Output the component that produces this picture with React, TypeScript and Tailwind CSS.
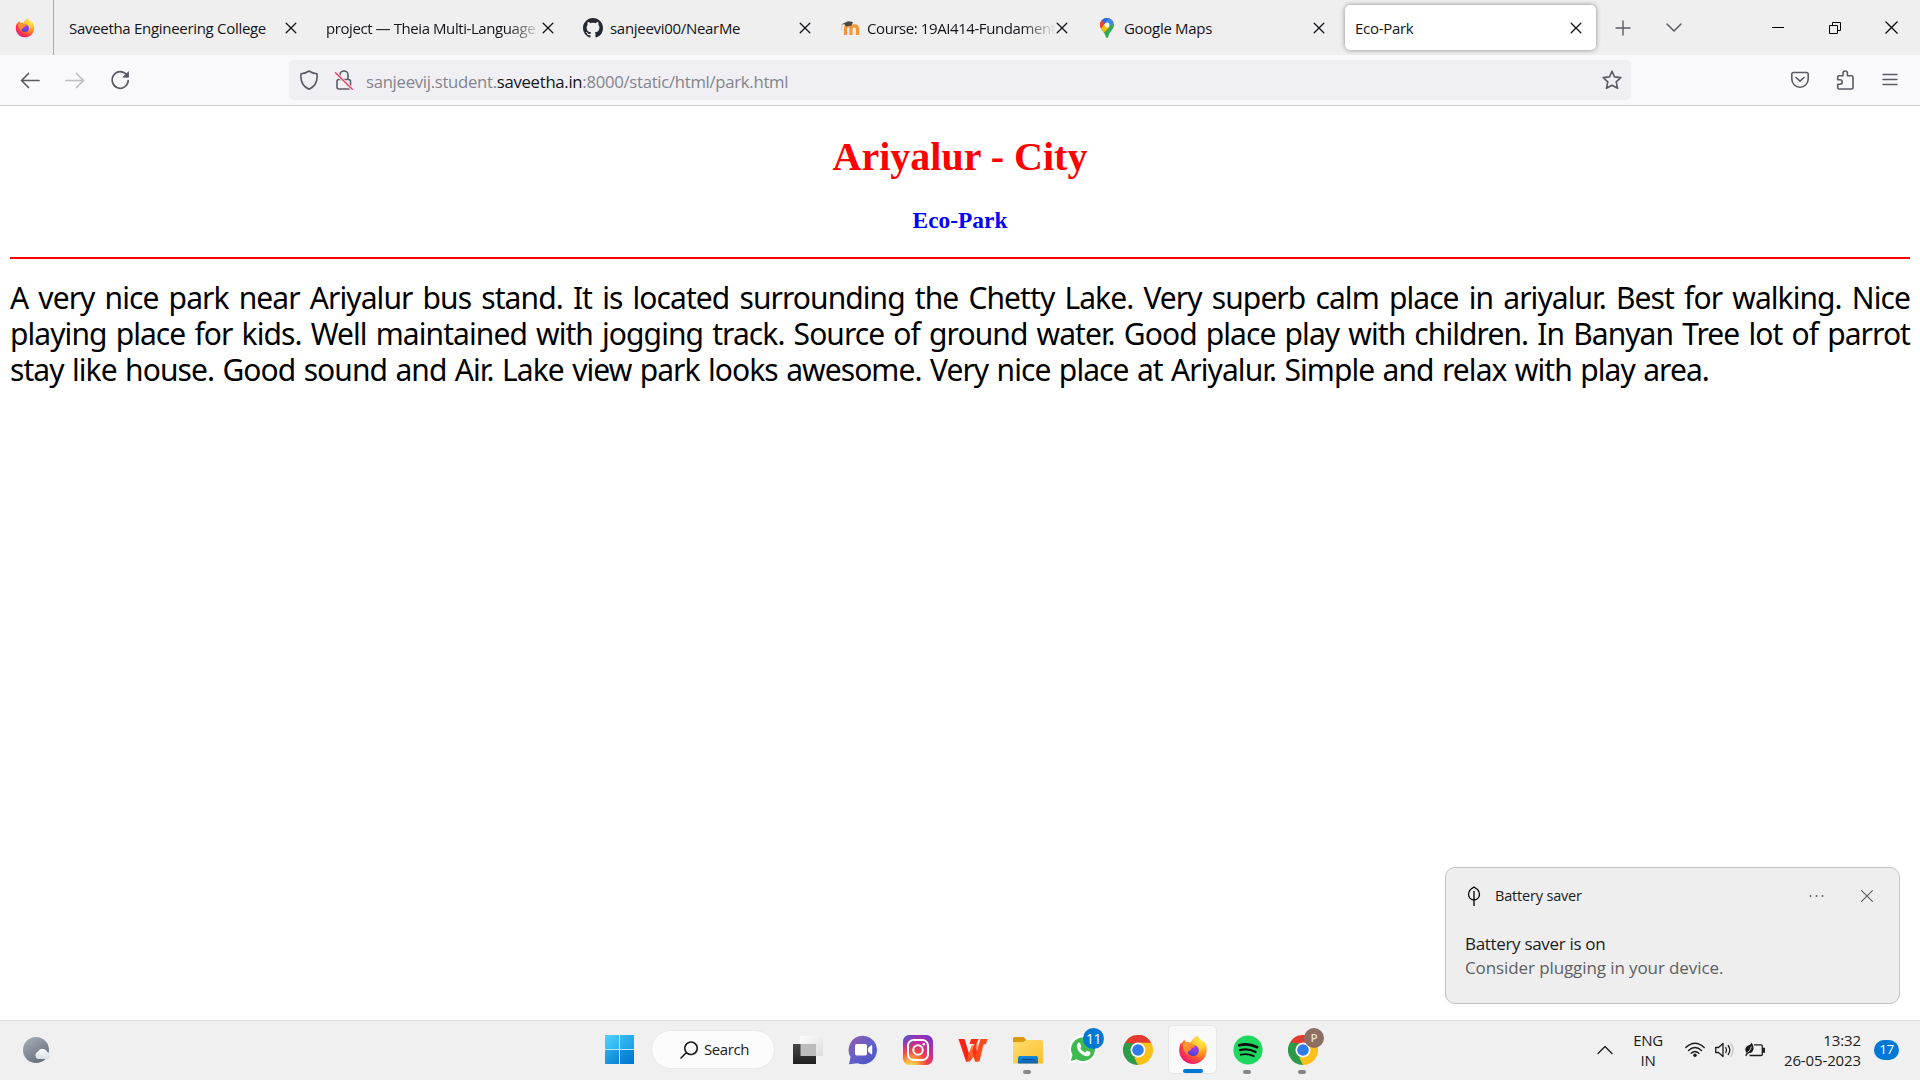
import type { ReactNode } from "react";

type IconProps = { className?: string };

function FirefoxLogo({ className, id }: IconProps & { id: string }) {
  return (
    <svg viewBox="0 0 30 30" className={className}>
      <defs>
        <radialGradient id={id + "a"} cx="0.82" cy="0.12" r="1">
          <stop offset="0" stopColor="#fff44f" />
          <stop offset="0.3" stopColor="#ffcb32" />
          <stop offset="0.55" stopColor="#ff8a1f" />
          <stop offset="0.8" stopColor="#ff3b47" />
          <stop offset="1" stopColor="#f0187a" />
        </radialGradient>
        <radialGradient id={id + "b"} cx="0.6" cy="0.2" r="0.8">
          <stop offset="0" stopColor="#b833e1" />
          <stop offset="0.6" stopColor="#6f42e8" />
          <stop offset="1" stopColor="#4a3cc8" />
        </radialGradient>
        <linearGradient id={id + "c"} x1="0" y1="0" x2="1" y2="1">
          <stop offset="0" stopColor="#ffa436" />
          <stop offset="1" stopColor="#ff6a2a" />
        </linearGradient>
      </defs>
      <path
        d="M19.5 0.5C20.5 3 23 4.8 25 6.5C25.8 7.3 25.9 7 25.6 5.8C28.4 9 29 12.500 28.700 16C28 23.500 22 29 15 29C7.500 29 1.500 23 1.200 16C1 12 2.200 9 3.400 7.200L3.800 9.200C4.200 7.500 5 6 6.500 4.500L7.300 7.500C9 6.800 11 7 12.500 7.600C14 4.500 16.500 2.500 19.500 0.500Z"
        fill={"url(#" + id + "a)"}
      />
      <circle cx="15.200" cy="15.500" r="5.600" fill={"url(#" + id + "b)"} />
      <path
        d="M5 9C7 7.500 10 7.500 12 8.500C13.500 10 15.500 10 17.200 10.400C16.800 12.500 14.500 12.500 13.500 13.500C12.800 14.500 13 15.500 11.500 16C9.500 16.500 9 18 10.200 20C6.500 18 4.500 13 5 9Z"
        fill={"url(#" + id + "c)"}
      />
      <path
        d="M16 7C19.500 7.800 22 11 21.800 15.500C24 12.500 23.500 9.500 21 6.500C19.500 4.800 18.800 3 19 1.500C16.800 3 16 5 16 7Z"
        fill="#ffd938"
        opacity="0.75"
      />
    </svg>
  );
}

function ChromeLogo({ className }: IconProps) {
  return (
    <svg viewBox="0 0 48 48" className={className}>
      <path d="M24 24L3.200 12A24 24 0 0 1 44.800 12Z" fill="#e33b2e" />
      <path d="M24 24L44.800 12A24 24 0 0 1 24 48Z" fill="#fbc116" />
      <path d="M24 24L24 48A24 24 0 0 1 3.200 12Z" fill="#2c9b48" />
      <path d="M24 12H44.800L34 24Z" fill="#fbc116" />
      <path d="M24 12H44.800A24 24 0 0 0 24 0Z" fill="#e33b2e" />
      <path d="M34.400 30L24 48L18 36Z" fill="#fbc116" />
      <path d="M13.600 30L3.200 12L20 14Z" fill="#2c9b48" />
      <circle cx="24" cy="24" r="12" fill="#fff" />
      <circle cx="24" cy="24" r="9.300" fill="#2f7be8" />
    </svg>
  );
}

function GithubLogo({ className }: IconProps) {
  return (
    <svg viewBox="0 0 16 16" className={className} fill="#24292f">
      <path d="M8 0C3.580 0 0 3.580 0 8c0 3.540 2.290 6.530 5.470 7.590.4.070.55-.17.55-.38 0-.19-.01-.82-.01-1.490-2.010.37-2.530-.49-2.690-.94-.09-.23-.48-.94-.82-1.130-.28-.15-.68-.52-.01-.53.63-.01 1.080.58 1.230.82.72 1.210 1.870.87 2.330.66.07-.52.28-.87.51-1.070-1.780-.2-3.640-.89-3.640-3.950 0-.87.31-1.590.82-2.150-.08-.2-.36-1.020.08-2.120 0 0 .67-.21 2.200.82.64-.18 1.320-.27 2-.27s1.360.09 2 .27c1.530-1.040 2.200-.82 2.200-.82.44 1.100.16 1.920.08 2.120.51.56.82 1.270.82 2.150 0 3.070-1.870 3.750-3.650 3.950.29.25.54.73.54 1.480 0 1.070-.01 1.930-.01 2.200 0 .21.15.46.55.38A8.010 8.010 0 0 0 16 8c0-4.420-3.580-8-8-8z" />
    </svg>
  );
}

function MoodleLogo({ className }: IconProps) {
  return (
    <svg viewBox="0 0 20 20" className={className}>
      <path
        d="M5.500 17V10.500Q5.500 7.800 8 7.800Q11 7.800 11 10.500V17M11 10.500Q11.300 7.800 14.300 7.800Q17.500 7.800 17.500 10.500V17"
        fill="none"
        stroke="#f7953a"
        strokeWidth="3.200"
      />
      <path d="M1 6.500L8 3.200L13 4L11.500 7.500L6 8.500L4.500 6.300Z" fill="#4a4644" />
      <path d="M2.200 6.500L1.200 12" stroke="#e9bd92" strokeWidth="0.900" />
    </svg>
  );
}

function MapsPin({ className }: IconProps) {
  return (
    <svg viewBox="0 0 14 20" className={className}>
      <defs>
        <clipPath id="pin">
          <path d="M7 0A7 7 0 0 0 0 7C0 11.500 4 12.500 5.700 18.500Q7 21.500 8.300 18.500C10 12.500 14 11.500 14 7A7 7 0 0 0 7 0Z" />
        </clipPath>
      </defs>
      <g clipPath="url(#pin)">
        <rect width="14" height="20" fill="#34a853" />
        <path d="M0 11L9 0H0Z" fill="#ea4335" />
        <path d="M1.500 2.200L5 5.200L10.500 -1H3Z" fill="#1a73e8" />
        <path d="M5 5.200L9 0H14V4L9 9Z" fill="#4285f4" />
        <path d="M0 10L4.500 5.500L9.500 9L2.500 16Z" fill="#fbbc04" />
        <path d="M0 9.500V3L1.700 2L5 5.200L1.500 10Z" fill="#ea4335" />
      </g>
      <circle cx="7" cy="7" r="2.500" fill="#fff" />
    </svg>
  );
}

function Line({ className, d, w = 1.5, box = "0 0 20 20" }: IconProps & { d: string; w?: number; box?: string }) {
  return (
    <svg viewBox={box} className={className} fill="none" stroke="currentColor" strokeWidth={w} strokeLinecap="round" strokeLinejoin="round">
      <path d={d} />
    </svg>
  );
}

function Tab({ icon, title, fade, active }: { icon?: ReactNode; title: string; fade?: boolean; active?: boolean }) {
  return (
    <div className="flex h-[55px] w-[257px] shrink-0 px-[3px] py-[5px]">
      <div
        className={
          active
            ? "flex h-[45px] w-full items-center rounded-[5px] bg-white pr-[14px] pl-[10px] shadow-[0_0_5px_rgba(0,0,0,0.42)]"
            : "flex h-[45px] w-full items-center pr-[14px] pl-[9px]"
        }
      >
        {icon && <span className="mr-[7px] flex w-5 shrink-0 justify-center">{icon}</span>}
        <span
          className={
            fade
              ? "min-w-0 flex-1 [mask-image:linear-gradient(to_left,transparent,black_34px)] text-[15px] leading-5 tracking-[-0.42px] whitespace-nowrap"
              : "min-w-0 flex-1 text-[15px] leading-5 tracking-[-0.3px] whitespace-nowrap"
          }
        >
          {title}
        </span>
        <Line className="size-3 shrink-0" box="0 0 12 12" d="M1.200 1.200L10.800 10.800M10.800 1.200L1.200 10.800" w={1.3} />
      </div>
    </div>
  );
}

function BrowserTabs() {
  return (
    <div className="flex h-[55px] w-full bg-[#efefef] text-[#15141a]">
      <div className="flex w-[54px] shrink-0 items-center justify-center border-r border-[#acacac] pr-1">
        <FirefoxLogo id="fxtab" className="size-5" />
      </div>
      <div className="flex pl-[3px]">
        <Tab title="Saveetha Engineering College" />
        <Tab title="project — Theia Multi-Language" fade />
        <Tab title="sanjeevi00/NearMe" icon={<GithubLogo className="size-5" />} />
        <Tab title="Course: 19AI414-Fundament" fade icon={<MoodleLogo className="size-5" />} />
        <Tab title="Google Maps" icon={<MapsPin className="h-5 w-[14px]" />} />
        <Tab title="Eco-Park" active />
      </div>
      <div className="flex flex-1 items-center pl-[16px] text-[#5b5b66]">
        <Line className="size-4" box="0 0 16 16" d="M8 1V15M1 8H15" w={1.4} />
        <Line className="ml-[35px] size-4" box="0 0 16 16" d="M1 4L8 11L15 4" w={1.5} />
      </div>
      <div className="flex items-center gap-[44px] pr-[22px] text-black">
        <svg className="h-[14px] w-3" viewBox="0 0 12 14"><path d="M0 6.500H12" stroke="currentColor" /></svg>
        <svg className="ml-[1px] h-[14px] w-3" viewBox="0 0 12 14" fill="none" stroke="currentColor">
          <path d="M0.500 4.500H8.500V12.500H0.500ZM3.500 4.500V1.500H11.500V9.500H8.500" />
        </svg>
        <svg className="h-[14px] w-[13px]" viewBox="0 0 13 14" stroke="currentColor" strokeWidth="1.200"><path d="M0.500 0.500L12.500 12.500M12.500 0.500L0.500 12.500" /></svg>
      </div>
    </div>
  );
}

function Toolbar() {
  return (
    <div className="flex h-[51px] w-full items-center border-b border-[#cccccc] bg-[#f9f9fb] pl-5 text-[#5b5b66]">
      <Line className="size-5" d="M1.500 10.500H19M8.500 3.500L1.500 10.500L8.500 17.500" w={1.7} />
      <Line className="ml-[25px] size-5 text-[#bdbdc3]" d="M18.500 10.500H1M11.500 3.500L18.500 10.500L11.500 17.500" w={1.7} />
      <svg className="ml-[25px] size-5" viewBox="0 0 20 20" fill="none" stroke="currentColor" strokeWidth="1.700" strokeLinecap="round">
        <path d="M16.500 4.800A8 8.300 0 1 0 18.200 10.500" />
        <path d="M18.500 2V7.200H13.300Z" fill="currentColor" strokeWidth="0.800" strokeLinejoin="round" />
      </svg>
      <div className="ml-[159px] flex h-10 w-[1342px] shrink-0 items-center rounded-[5px] bg-[#f0f0f4] pr-[9px] pl-[10px]">
        <Line className="size-5" d="M10 1Q13.500 3.500 18 3.800C18.800 11 16 16.500 10 19.200C4 16.500 1.200 11 2 3.800Q6.500 3.500 10 1Z" w={1.6} />
        <svg className="ml-[15px] size-5" viewBox="0 0 20 20" fill="none" strokeLinecap="round" strokeWidth="1.600">
          <rect x="3" y="9.500" width="13.500" height="9.500" rx="2" stroke="#5b5b66" />
          <path d="M6 9V5A4 4 0 0 1 14 5V9" stroke="#5b5b66" />
          <path d="M2.500 3.800L17.800 18.800" stroke="#f0f0f4" strokeWidth="3.200" />
          <path d="M1.500 2.800L18.300 19.300" stroke="#f2446a" strokeWidth="1.600" />
        </svg>
        <span className="ml-3 flex-1 pt-[3px] text-[16.700px] leading-6 tracking-[-0.28px] whitespace-nowrap text-[#84848b]">
          sanjeevij.student.<span className="text-[#15141a]">saveetha.in</span>:8000/static/html/park.html
        </span>
        <Line className="size-5" d="M10 1.200L12.500 6.900L18.800 7.600L14.200 11.900L15.600 18.300L10 15.200L4.400 18.300L5.800 11.900L1.200 7.600L7.500 6.900Z" w={1.6} />
      </div>
      <div className="ml-[159px] flex items-center gap-[26px]">
        <svg className="size-5" viewBox="0 0 20 20" fill="none" stroke="currentColor" strokeWidth="1.600" strokeLinecap="round" strokeLinejoin="round">
          <path d="M3.500 2.500H16.500Q18.200 2.500 18.200 4.200V9A8.200 8.200 0 0 1 1.800 9V4.200Q1.800 2.500 3.500 2.500Z" />
          <path d="M6 7.500L10 11.200L14 7.500" />
        </svg>
        <Line className="size-5" d="M3.200 5.800H7V3.200A2.200 2.200 0 0 1 11.400 3.200V5.800H15.500Q17 5.800 17 7.300V17.500Q17 19 15.500 19H3.200Q1.700 19 1.700 17.500V14.200H4A2.200 2.200 0 0 0 4 9.800H1.700V7.300Q1.700 5.800 3.200 5.800Z" w={1.6} />
        <Line className="-ml-[2px] size-5" d="M3 4.500H17M3 9.500H17M3 14.500H17" w={1.4} />
      </div>
    </div>
  );
}

function Page() {
  return (
    <main className="h-[914px] w-full px-[10px] pt-[28px]">
      <h1 className="text-center font-['Liberation_Serif',serif] text-[40px] leading-[46px] font-bold text-[#ff0000]">Ariyalur - City</h1>
      <h3 className="mt-[27px] text-center font-['Liberation_Serif',serif] text-[23.400px] leading-[27px] font-bold text-[#0000ff]">Eco-Park</h3>
      <hr className="mt-[23px] h-[2px] border-0 bg-[#ff0000]" />
      <div className="mt-[21px] font-['Noto_Sans',sans-serif] text-[30px] leading-[36px] tracking-[-0.93px] text-black">
        <p className="[text-align-last:justify]">
          A very nice park near Ariyalur bus stand. It is located surrounding the Chetty Lake. Very superb calm place in ariyalur. Best for walking. Nice
        </p>
        <p className="[text-align-last:justify]">
          playing place for kids. Well maintained with jogging track. Source of ground water. Good place play with children. In Banyan Tree lot of parrot
        </p>
        <p className="[word-spacing:1.500px]">
          stay like house. Good sound and Air. Lake view park looks awesome. Very nice place at Ariyalur. Simple and relax with play area.
        </p>
      </div>
    </main>
  );
}

function Notification() {
  return (
    <aside className="absolute top-[867px] left-[1445px] h-[137px] w-[455px] rounded-[10px] border border-[#c3c3c3] bg-[#eeeeee] pr-[26px] pl-[19px] text-[#1b1b1b]">
      <div className="flex h-[56px] items-center">
        <svg className="ml-[2px] h-5 w-[14px]" viewBox="0 0 14 20" fill="none" stroke="#000" strokeWidth="1.300">
          <path d="M7 1L10.500 3.500Q12.500 5.500 12.500 8.500Q12 13.500 7 14Q2 13.500 1.500 8.500Q1.500 5.500 3.500 3.500ZM7 5V20" />
        </svg>
        <span className="ml-[14px] flex-1 text-[14.500px] tracking-[-0.18px]">Battery saver</span>
        <svg className="h-1 w-[15px]" viewBox="0 0 15 4" fill="#5c5c5c">
          <circle cx="1.500" cy="2" r="0.950" /><circle cx="7.500" cy="2" r="0.950" /><circle cx="13.500" cy="2" r="0.950" />
        </svg>
        <Line className="ml-[37px] size-3 text-[#5c5c5c]" box="0 0 12 12" d="M0.600 0.600L11.400 11.400M11.400 0.600L0.600 11.400" w={1.1} />
      </div>
      <p className="mt-[8px] text-[17px] leading-6 tracking-[-0.32px]">Battery saver is on</p>
      <p className="text-[17px] leading-6 tracking-[-0.1px] text-[#606060]">Consider plugging in your device.</p>
    </aside>
  );
}

function AppSlot({ children, running, active }: { children: ReactNode; running?: boolean; active?: boolean }) {
  return (
    <div
      className={
        active
          ? "relative mx-[3px] flex h-[49px] w-[49px] items-center justify-center rounded-[5px] border border-[#e6e6e6] bg-[#f9f9f9]"
          : "relative mx-[3px] flex h-[49px] w-[49px] items-center justify-center"
      }
    >
      {children}
      {running && <span className="absolute bottom-0 left-5 h-1 w-2 rounded-full bg-[#868686]" />}
      {active && <span className="absolute bottom-0 left-[14px] h-1 w-5 rounded-full bg-[#0078d4]" />}
    </div>
  );
}

function Taskbar() {
  return (
    <footer className="flex h-[60px] w-full items-center border-t border-[#dedede] bg-[#f0f0f0] pb-[2px] text-[#1b1b1b]">
      <svg className="ml-[22px] h-[28px] w-[30px] shrink-0" viewBox="0 0 30 28">
        <defs>
          <linearGradient id="moon" x1="0" y1="0" x2="0.600" y2="1"><stop offset="0" stopColor="#a9b3bd" /><stop offset="1" stopColor="#68717b" /></linearGradient>
          <linearGradient id="cloud" x1="0" y1="0" x2="0" y2="1"><stop offset="0" stopColor="#fafcfe" /><stop offset="1" stopColor="#d7dfe6" /></linearGradient>
        </defs>
        <circle cx="14" cy="14" r="13" fill="url(#moon)" />
        <path d="M16 23A4 4 0 0 1 16 15.500A5.300 5.300 0 0 1 25.500 16.200A3.500 3.500 0 0 1 26 23Z" fill="url(#cloud)" />
      </svg>

      <div className="ml-[543px] flex items-center">
        <div className="mr-[17px] ml-[10px] grid size-[29px] grid-cols-2 gap-px bg-[#bfe9fb]">
          <span className="bg-linear-to-br from-[#4fd0fb] to-[#26b2ee]" />
          <span className="bg-linear-to-br from-[#35bcf2] to-[#1b9fe4]" />
          <span className="bg-linear-to-br from-[#27aeeb] to-[#0a82d6]" />
          <span className="bg-linear-to-br from-[#1493de] to-[#0074d0]" />
        </div>
        <div className="mr-[5px] flex h-[39px] w-[124px] items-center rounded-full border border-[#e9e9e9] bg-[#fcfcfc] pl-7">
          <Line className="size-[18px]" box="0 0 18 18" d="M6.500 11.500L1 17M6.500 11.500A6.200 6.200 0 1 1 6.800 11.800" w={1.6} />
          <span className="ml-[6px] text-[15px] tracking-[-0.4px]">Search</span>
        </div>

        <AppSlot>
          <svg className="size-[30px]" viewBox="0 0 30 30">
            <defs>
              <linearGradient id="tvd" x1="0" y1="0" x2="0" y2="1"><stop offset="0" stopColor="#474747" /><stop offset="1" stopColor="#1f1f1f" /></linearGradient>
              <linearGradient id="tvl" x1="0" y1="0" x2="1" y2="1"><stop offset="0" stopColor="#fdfdfd" /><stop offset="1" stopColor="#dcdcdc" /></linearGradient>
            </defs>
            <path d="M7 1H30V21H7Z" fill="url(#tvl)" />
            <path d="M0 9H23V29H0Z" fill="url(#tvd)" />
            <path d="M7.500 9H23V21H7.500Z" fill="#bcbcbc" />
          </svg>
        </AppSlot>
        <AppSlot>
          <svg className="size-[30px]" viewBox="0 0 30 30">
            <defs>
              <linearGradient id="chat" x1="0.100" y1="0.100" x2="0.800" y2="0.900"><stop offset="0" stopColor="#8b5bb0" /><stop offset="0.500" stopColor="#6661c8" /><stop offset="1" stopColor="#4f55c9" /></linearGradient>
            </defs>
            <path d="M15 0.800A14.200 14.200 0 1 1 9.500 28.200L1 29.200L2.500 22A14.200 14.200 0 0 1 15 0.800Z" fill="url(#chat)" />
            <rect x="7" y="9" width="12" height="11.500" rx="1.800" fill="#fff" />
            <path d="M20 13L23.500 10Q24.200 10 24.200 11V18.500Q24.200 19.500 23.500 19.500L20 16.500Z" fill="#fff" />
          </svg>
        </AppSlot>
        <AppSlot>
          <svg className="size-[30px]" viewBox="0 0 30 30">
            <defs>
              <radialGradient id="ig" cx="0.270" cy="1.050" r="1.150"><stop offset="0" stopColor="#ffdd55" /><stop offset="0.180" stopColor="#ffb545" /><stop offset="0.450" stopColor="#f3453f" /><stop offset="0.700" stopColor="#c92d92" /><stop offset="1" stopColor="#7a33c8" /></radialGradient>
              <radialGradient id="igb" cx="0" cy="0" r="0.550"><stop offset="0" stopColor="#3e62d8" /><stop offset="1" stopColor="#7a3fd0" stopOpacity="0" /></radialGradient>
            </defs>
            <rect width="30" height="30" rx="6.500" fill="url(#ig)" />
            <rect width="30" height="30" rx="6.500" fill="url(#igb)" />
            <rect x="5" y="5" width="20" height="20" rx="5.500" fill="none" stroke="#fff" strokeWidth="2" />
            <circle cx="15" cy="15" r="4.700" fill="none" stroke="#fff" strokeWidth="2" />
            <circle cx="20.800" cy="9.200" r="1.300" fill="#fff" />
          </svg>
        </AppSlot>
        <AppSlot>
          <svg className="size-[30px]" viewBox="0 0 30 30">
            <defs>
              <linearGradient id="wps" x1="0" y1="1" x2="1" y2="0"><stop offset="0" stopColor="#ff3a12" /><stop offset="1" stopColor="#ff9a5c" /></linearGradient>
            </defs>
            <path d="M0.500 4H6.500L11 18.500L9.800 26.500H8Z" fill="#ff2113" />
            <path d="M7.500 4H13.500L20 26.500H17.500L14.500 24Z" fill="#ff5a24" opacity="0" />
            <path d="M15.500 9.500H20.500L15.500 22L11.800 26.500H8L13.500 11Z" fill="url(#wps)" />
            <path d="M13 4H20.500L17.500 12L20.500 20L20 26.500H17L14.200 16.500L16.500 9H11.500Z" fill="#ff3016" />
            <path d="M22.500 4H29.500L28 9L25.500 9.500L21.500 26.500H17L17.500 20.500Z" fill="#ff4a1c" />
          </svg>
        </AppSlot>
        <AppSlot running>
          <svg className="size-[30px]" viewBox="0 0 30 30">
            <defs>
              <linearGradient id="fold" x1="0" y1="0" x2="1" y2="1"><stop offset="0" stopColor="#ffdd6e" /><stop offset="1" stopColor="#fbc02d" /></linearGradient>
              <linearGradient id="tray" x1="0" y1="0" x2="0" y2="1"><stop offset="0" stopColor="#1b8bdc" /><stop offset="1" stopColor="#0b62b0" /></linearGradient>
            </defs>
            <path d="M0 3.500Q0 2 1.500 2H10.500L13.500 5V10H0Z" fill="#dd9a0c" />
            <path d="M0 7H10L13.500 5H28.500Q30 5 30 6.500V28.500H0Z" fill="url(#fold)" />
            <path d="M5 28.500V23Q5 21 7 21H23Q25 21 25 23V28.500Z" fill="url(#tray)" />
            <path d="M9 24.500H21.500" stroke="#0a4e93" />
          </svg>
        </AppSlot>
        <AppSlot>
          <svg className="size-[31px]" viewBox="0 0 31 31">
            <path d="M16 1A14 14 0 1 1 9.500 27.500L1 30L3.500 21.500A14 14 0 0 1 16 1Z" fill="#fff" />
            <path d="M16 3.500A11.800 11.800 0 1 1 9.800 25.200L3.800 27L5.500 21A11.800 11.800 0 0 1 16 3.500Z" fill="#3dbb4f" />
            <path d="M11 9Q12.300 8 13.200 9.500L14.400 12.200Q14.500 13 13.300 14.300Q14.800 17.200 18 18.600L19.700 16.900Q20.200 16.500 23.400 18.300Q23.700 21.500 20.500 22.300Q16.500 22.500 12.800 18.600Q7.800 13 11 9Z" fill="#fff" />
          </svg>
          <span className="absolute top-[3px] left-[25px] flex size-[21px] items-center justify-center rounded-full bg-[#0078d4] text-[14px] tracking-[-0.5px] text-white">11</span>
        </AppSlot>
        <AppSlot><ChromeLogo className="size-[30px]" /></AppSlot>
        <AppSlot active><FirefoxLogo id="fxbar" className="size-[30px]" /></AppSlot>
        <AppSlot running>
          <svg className="size-[30px]" viewBox="0 0 30 30" fill="none" stroke="#0b0b0b" strokeLinecap="round">
            <circle cx="15" cy="15" r="14.600" fill="#1ed760" stroke="none" />
            <path d="M6.200 10.300Q15.500 7.800 24.200 12.200" strokeWidth="2.700" />
            <path d="M7 15.200Q15 13 22.600 17" strokeWidth="2.300" />
            <path d="M7.700 19.700Q14.500 18 20.800 21.200" strokeWidth="1.900" />
          </svg>
        </AppSlot>
        <AppSlot running>
          <ChromeLogo className="size-[30px]" />
          <span className="absolute top-[3px] left-[26px] flex size-5 items-center justify-center rounded-full bg-[#8d6e63] text-[11.500px] font-semibold text-[#e6dcd8]">P</span>
        </AppSlot>
      </div>

      <div className="ml-auto flex items-center pr-[21px]">
        <Line className="h-[10px] w-4" box="0 0 16 10" d="M1 8.500L8 1.500L15 8.500" w={1.3} />
        <div className="ml-[20px] w-[30px] text-center text-[15px] leading-5 tracking-[-0.3px]">ENG<br />IN</div>
        <svg className="ml-[22px] h-5 w-5" viewBox="0 0 20 20" fill="none" stroke="currentColor" strokeWidth="1.400" strokeLinecap="round">
          <path d="M0.800 7.600Q10 -1.200 19.200 7.600M3.500 10.500Q10 4.300 16.500 10.500M6.200 13.300Q10 9.700 13.800 13.300" />
          <circle cx="10" cy="15.300" r="1.700" fill="currentColor" stroke="none" />
        </svg>
        <svg className="ml-[10px] h-5 w-5" viewBox="0 0 20 20" fill="none" stroke="currentColor" strokeWidth="1.300" strokeLinecap="round" strokeLinejoin="round">
          <path d="M0.700 7.500H3.500L8 3.500V16.500L3.500 12.500H0.700ZM10.800 7.500Q12.300 10 10.800 12.500M13.200 5.500Q16.500 10 13.200 14.500" />
          <path d="M15.800 3.500Q20.500 10 15.800 16.500" stroke="#c4c4c4" />
        </svg>
        <svg className="ml-[10px] h-5 w-5" viewBox="0 0 20 20">
          <path d="M9 4.800H16Q17.300 4.800 17.300 6.100V14.200Q17.300 15.500 16 15.500H4.500M18.200 8.300H19.600V12H18.200Z" fill="none" stroke="currentColor" strokeWidth="1.300" />
          <path d="M6.500 2.500Q9.300 6 8.300 10Q7 13.500 3.200 13.300L1.200 16.200L0.300 15.500L1.500 12.800Q-0.800 9.500 1.200 7Q2.500 5.500 4.300 5Q6.300 4.300 6.500 2.500Z" fill="currentColor" />
          <path d="M2.500 12.500Q5.800 10.500 6.300 6.500" stroke="#f0f0f0" strokeWidth="0.800" fill="none" />
        </svg>
        <div className="ml-[16px] w-[80px] text-right text-[15px] leading-5 tracking-[-0.12px]">13:32<br />26-05-2023</div>
        <span className="ml-[13px] flex h-5 w-[25px] items-center justify-center rounded-full bg-[#0078d4] text-[13.500px] tracking-[-0.4px] text-white">17</span>
      </div>
    </footer>
  );
}

export default function App() {
  return (
    <div className="relative flex h-[1080px] w-[1920px] flex-col overflow-hidden bg-white font-['Open_Sans',sans-serif]">
      <BrowserTabs />
      <Toolbar />
      <Page />
      <Taskbar />
      <Notification />
    </div>
  );
}
